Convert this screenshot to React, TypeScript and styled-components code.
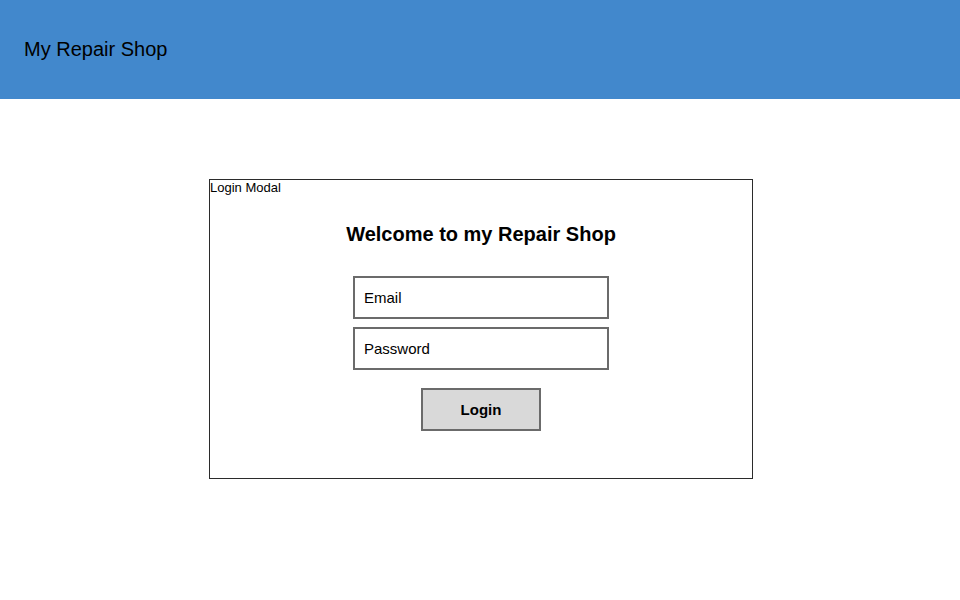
import React from "react";
import styled, { createGlobalStyle } from "styled-components";

const GlobalStyle = createGlobalStyle`
  html, body {
    margin: 0;
    padding: 0;
    background: #ffffff;
    font-family: "Liberation Sans", Arial, sans-serif;
    color: #000000;
  }
  * { box-sizing: border-box; }
`;

const Header = styled.header`
  height: 99px;
  background: #4288cc;
  display: flex;
  align-items: center;
  padding-left: 24px;
  padding-bottom: 2px;
`;

const Brand = styled.h1`
  margin: 0;
  font-size: 20px;
  font-weight: normal;
  line-height: 24px;
  color: #000;
`;

const Main = styled.main`
  display: flex;
  justify-content: center;
  padding-top: 80px;
  padding-left: 2px;
`;

const Modal = styled.section`
  width: 544px;
  height: 300px;
  border: 1px solid #2b2b2b;
  display: flex;
  flex-direction: column;
  align-items: center;
`;

const ModalLabel = styled.div`
  align-self: flex-start;
  font-size: 13px;
  line-height: 15px;
`;

const Title = styled.h2`
  margin: 27px 0 0;
  font-size: 20px;
  font-weight: bold;
  line-height: 24px;
`;

const Form = styled.form`
  margin-top: 30px;
  display: flex;
  flex-direction: column;
  align-items: center;
  gap: 8px;
`;

const Field = styled.input`
  width: 256px;
  height: 43px;
  border: 2px solid #6b6b6b;
  padding: 0 0 0 9px;
  font-family: "Liberation Sans", Arial, sans-serif;
  font-size: 15px;
  color: #000;
  background: #fff;
  outline: none;
  &::placeholder { color: #000; opacity: 1; }
`;

const Submit = styled.button`
  margin-top: 10px;
  width: 120px;
  height: 43px;
  background: #d9d9d9;
  border: 2px solid #6b6b6b;
  font-family: "Liberation Sans", Arial, sans-serif;
  font-size: 15px;
  font-weight: bold;
  color: #000;
  padding: 0;
`;

export default function App() {
  return (
    <>
      <GlobalStyle />
      <Header>
        <Brand>My Repair Shop</Brand>
      </Header>
      <Main>
        <Modal>
          <ModalLabel>Login Modal</ModalLabel>
          <Title>Welcome to my Repair Shop</Title>
          <Form onSubmit={(e) => e.preventDefault()}>
            <Field type="email" placeholder="Email" />
            <Field type="password" placeholder="Password" />
            <Submit type="submit">Login</Submit>
          </Form>
        </Modal>
      </Main>
    </>
  );
}
